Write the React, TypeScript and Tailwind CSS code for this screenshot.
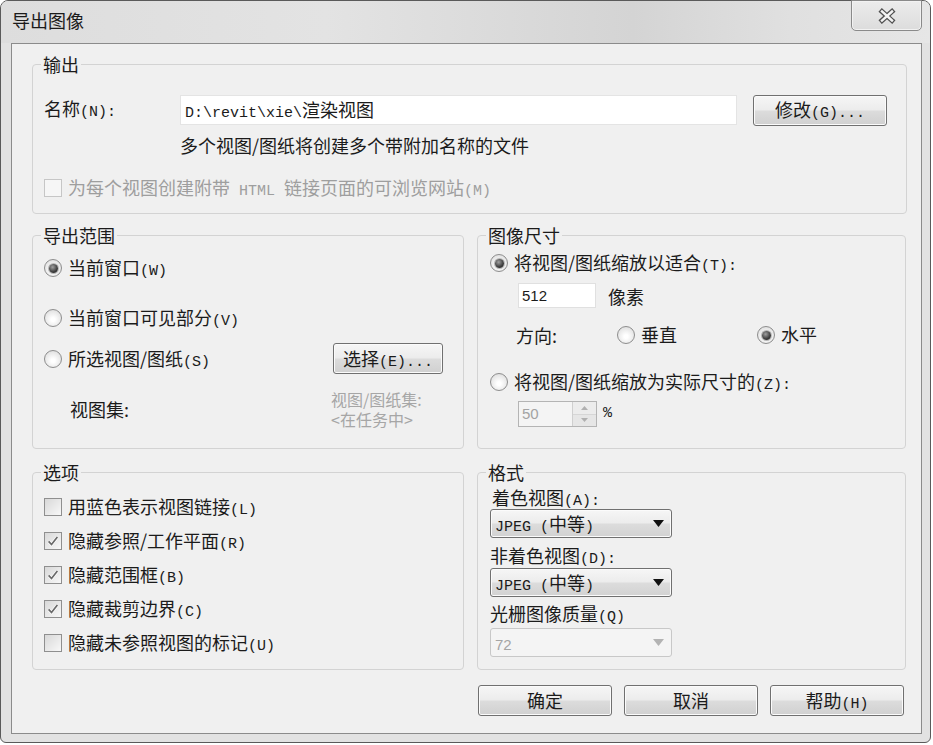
import React from "react"

// 导出图像 dialog (Win7 basic look)

const K = ({ children }: { children: React.ReactNode }) => (
  <span className="font-['Liberation_Mono',monospace] text-[15px]">{children}</span>
)

const Radio = ({ checked }: { checked?: boolean }) => (
  <span className="flex h-[18px] w-[18px] shrink-0 items-center justify-center rounded-full border border-[#8d8d8d] bg-[radial-gradient(circle_at_50%_60%,#ffffff_15%,#d6d6d6_100%)]">
    {checked && (
      <span className="h-[9px] w-[9px] rounded-full bg-[radial-gradient(circle_at_40%_35%,#a0a0a0_0%,#3c3c3c_60%,#202020_100%)] shadow-[0_0_0_1px_#b8b8b8]" />
    )}
  </span>
)

const RadioRow = ({ checked, children }: { checked?: boolean; children: React.ReactNode }) => (
  <label className="flex h-[20px] items-center gap-[6px]">
    <Radio checked={checked} />
    <span className="-mt-[2px] block h-[20px] whitespace-nowrap">{children}</span>
  </label>
)

const CheckRow = ({
  checked,
  disabled,
  children,
}: {
  checked?: boolean
  disabled?: boolean
  children: React.ReactNode
}) => (
  <label className={`flex h-[20px] items-center gap-[6px] ${disabled ? "text-[#9e9e9e]" : ""}`}>
    <span
      className={`flex h-[18px] w-[18px] shrink-0 items-center justify-center border ${
        disabled
          ? "border-[#c6c6c6] bg-[#f6f6f6]"
          : "border-[#8f8f8f] bg-[linear-gradient(135deg,#d8d8d8_0%,#f8f8f8_100%)]"
      }`}
    >
      {checked && (
        <svg viewBox="0 0 16 16" className="h-[14px] w-[14px]" fill="none">
          <path d="M3 8.5 6.3 12 13 3.5" stroke="#ffffff" strokeWidth="3.4" />
          <path d="M3 8.5 6.3 12 13 3.5" stroke="#6a6a6a" strokeWidth="2" />
        </svg>
      )}
    </span>
    <span className="-mt-[2px] block h-[20px] whitespace-nowrap">{children}</span>
  </label>
)

const Btn = ({ children, className }: { children: React.ReactNode; className?: string }) => (
  <button
    className={`flex h-[31px] shrink-0 items-center justify-center rounded-[3px] border border-[#707070] bg-[linear-gradient(#f6f6f6_0%,#ececec_48%,#dcdcdc_52%,#d0d0d0_100%)] text-[18px] text-[#1b1b1b] shadow-[inset_0_0_0_1px_#fbfbfb] ${className ?? ""}`}
  >
    <span className="-mt-[2px] block h-[20px] whitespace-nowrap leading-[20px]">{children}</span>
  </button>
)

const Select = ({
  disabled,
  children,
  className,
}: {
  disabled?: boolean
  children: React.ReactNode
  className?: string
}) => (
  <div
    className={`flex h-[29px] w-[182px] shrink-0 items-center justify-between rounded-[3px] border pl-[4px] pr-[7px] ${
      disabled
        ? "border-[#c8c8c8] bg-[#f4f4f4] text-[#a5a5a5]"
        : "border-[#707070] bg-[linear-gradient(#f6f6f6_0%,#ececec_48%,#dcdcdc_52%,#d2d2d2_100%)] shadow-[inset_0_0_0_1px_#fbfbfb]"
    } ${className ?? ""}`}
  >
    <span className="-mt-[2px] block h-[20px] whitespace-nowrap">{children}</span>
    <svg width="11" height="7" viewBox="0 0 11 7">
      <path d="M0 0h11L5.5 7z" fill={disabled ? "#b3b3b3" : "#111111"} />
    </svg>
  </div>
)

const Group = ({ title, children }: { title: string; children: React.ReactNode }) => (
  <fieldset className="min-w-0 rounded-[4px] border border-[#d3d3d3]">
    <legend className="ml-[8px] px-[2px] text-[18px] leading-[20px]">{title}</legend>
    {children}
  </fieldset>
)

export default function App() {
  return (
    <div className="h-[745px] w-[933px] overflow-hidden bg-white font-['Noto_Sans_CJK_SC',sans-serif] text-[18px] leading-[20px] text-[#1b1b1b]">
      <div className="flex h-[743px] w-[931px] flex-col rounded-t-[8px] rounded-b-[6px] border border-[#5a5a5a] bg-[#e2e2e2]">
        {/* title bar */}
        <div className="flex h-[42px] shrink-0 items-start justify-between rounded-t-[7px] bg-[linear-gradient(90deg,#dddddd_0%,#e3e3e3_35%,#d4d4d4_68%,#e0e0e0_85%,#e6e6e6_100%)]">
          <span className="ml-[11px] mt-[9px]">导出图像</span>
          <button className="-mt-px mr-[8px] flex h-[31px] w-[71px] items-center justify-center rounded-b-[5px] border border-[#8a8a8a] bg-[linear-gradient(#ececec,#dcdcdc)] shadow-[inset_0_0_0_1px_#f2f2f2]">
            <svg width="18" height="16" viewBox="0 0 18 16">
              <path d="M4 3.5 14 12.5M14 3.5 4 12.5" stroke="#505050" strokeWidth="5" strokeLinecap="square" />
              <path d="M4 3.5 14 12.5M14 3.5 4 12.5" stroke="#f3f3f3" strokeWidth="2.4" strokeLinecap="square" />
            </svg>
          </button>
        </div>

        {/* client area */}
        <div className="ml-[10px] mr-[8px] flex flex-col border border-[#8b8b8b] bg-[#f0f0f0] pb-[17px] pl-[20px] pr-[14px] pt-[10px]">
          <Group title="输出">
            <div className="flex flex-col pb-[15px] pl-[11px] pr-[17px] pt-[21px]">
              <div className="flex h-[30px] items-center">
                <span className="-mt-[4px] block h-[20px] w-[136px] whitespace-nowrap">
                  名称<K>(N):</K>
                </span>
                <div className="flex h-[30px] w-[557px] items-center border border-[#e4e4e4] bg-white pl-[4px]">
                  <span className="-mt-[2px] block h-[20px] whitespace-nowrap">
                    <K>{"D:\\revit\\xie\\"}</K>渲染视图
                  </span>
                </div>
                <Btn className="ml-[16px] w-[134px]">
                  修改<K>(G)...</K>
                </Btn>
              </div>
              <div className="mt-[10px] h-[20px] pl-[136px]">多个视图/图纸将创建多个带附加名称的文件</div>
              <div className="mt-[23px]">
                <CheckRow disabled>
                  为每个视图创建附带<K> HTML </K>链接页面的可浏览网站<K>(M)</K>
                </CheckRow>
              </div>
            </div>
          </Group>

          <div className="mt-[11px] grid grid-cols-[432px_429px] gap-x-[13px] gap-y-[13px]">
            <Group title="导出范围">
              <div className="flex flex-col pb-[19px] pl-[11px] pr-[20px] pt-[13px]">
                <RadioRow checked>
                  当前窗口<K>(W)</K>
                </RadioRow>
                <div className="mt-[30px]">
                  <RadioRow>
                    当前窗口可见部分<K>(V)</K>
                  </RadioRow>
                </div>
                <div className="mt-[15px] flex h-[31px] items-center justify-between">
                  <RadioRow>
                    所选视图/图纸<K>(S)</K>
                  </RadioRow>
                  <Btn className="w-[110px]">
                    选择<K>(E)...</K>
                  </Btn>
                </div>
                <div className="mt-[15px] flex h-[40px] items-center">
                  <span className="ml-[26px]">视图集:</span>
                  <div className="ml-auto flex w-[112px] flex-col text-[16px] leading-[20px] text-[#a6a6a6]">
                    <span className="h-[20px]">视图/图纸集:</span>
                    <span className="h-[20px]">&lt;在任务中&gt;</span>
                  </div>
                </div>
              </div>
            </Group>

            <Group title="图像尺寸">
              <div className="flex flex-col pb-[21px] pl-[12px] pt-[8px]">
                <RadioRow checked>
                  将视图/图纸缩放以适合<K>(T):</K>
                </RadioRow>
                <div className="mt-[10px] flex h-[25px] items-center">
                  <div className="ml-[28px] flex h-[25px] w-[78px] items-center border border-[#e0e0e0] bg-white pl-[3px] font-['Liberation_Sans',sans-serif] text-[15px]">
                    512
                  </div>
                  <span className="ml-[12px]">像素</span>
                </div>
                <div className="mt-[17px] flex h-[20px] items-center">
                  <span className="ml-[26px] w-[101px]">方向:</span>
                  <div className="w-[140px]">
                    <RadioRow>垂直</RadioRow>
                  </div>
                  <RadioRow checked>水平</RadioRow>
                </div>
                <div className="mt-[27px]">
                  <RadioRow>
                    将视图/图纸缩放为实际尺寸的<K>(Z):</K>
                  </RadioRow>
                </div>
                <div className="mt-[9px] flex h-[26px] items-center">
                  <div className="ml-[28px] flex h-[26px] w-[79px] items-center justify-between border border-[#b4b4b4] bg-[#f4f4f4]">
                    <span className="pl-[3px] font-['Liberation_Sans',sans-serif] text-[15px] text-[#a3a3a3]">50</span>
                    <div className="flex h-full w-[24px] flex-col border-l border-[#cfcfcf]">
                      <div className="flex flex-1 items-center justify-center border-b border-[#d6d6d6] bg-[#ececec]">
                        <svg width="7" height="4" viewBox="0 0 7 4">
                          <path d="M0 4h7L3.5 0z" fill="#b0b0b0" />
                        </svg>
                      </div>
                      <div className="flex flex-1 items-center justify-center bg-[#e6e6e6]">
                        <svg width="7" height="4" viewBox="0 0 7 4">
                          <path d="M0 0h7L3.5 4z" fill="#b0b0b0" />
                        </svg>
                      </div>
                    </div>
                  </div>
                  <span className="ml-[6px] flex h-[20px] items-center">
                    <K>%</K>
                  </span>
                </div>
              </div>
            </Group>

            <Group title="选项">
              <div className="flex flex-col gap-[14px] pb-[16px] pl-[11px] pt-[15px]">
                <CheckRow>
                  用蓝色表示视图链接<K>(L)</K>
                </CheckRow>
                <CheckRow checked>
                  隐藏参照/工作平面<K>(R)</K>
                </CheckRow>
                <CheckRow checked>
                  隐藏范围框<K>(B)</K>
                </CheckRow>
                <CheckRow checked>
                  隐藏裁剪边界<K>(C)</K>
                </CheckRow>
                <CheckRow>
                  隐藏未参照视图的标记<K>(U)</K>
                </CheckRow>
              </div>
            </Group>

            <Group title="格式">
              <div className="flex flex-col items-start pb-[12px] pl-[12px] pt-[5px]">
                <span className="ml-[2px] block h-[20px] whitespace-nowrap">
                  着色视图<K>(A):</K>
                </span>
                <Select className="mt-[2px]">
                  <K>JPEG (</K>中等<K>)</K>
                </Select>
                <span className="mt-[7px] block h-[20px] whitespace-nowrap">
                  非着色视图<K>(D):</K>
                </span>
                <Select className="mt-[3px]">
                  <K>JPEG (</K>中等<K>)</K>
                </Select>
                <span className="mt-[6px] block h-[20px] whitespace-nowrap">
                  光栅图像质量<K>(Q)</K>
                </span>
                <Select disabled className="mt-[5px]">
                  <span className="font-['Liberation_Sans',sans-serif] text-[15px]">72</span>
                </Select>
              </div>
            </Group>
          </div>

          <div className="mt-[15px] flex justify-end gap-[12px] pr-[3px]">
            <Btn className="w-[134px]">确定</Btn>
            <Btn className="w-[134px]">取消</Btn>
            <Btn className="w-[134px]">
              帮助<K>(H)</K>
            </Btn>
          </div>
        </div>
      </div>
    </div>
  )
}
